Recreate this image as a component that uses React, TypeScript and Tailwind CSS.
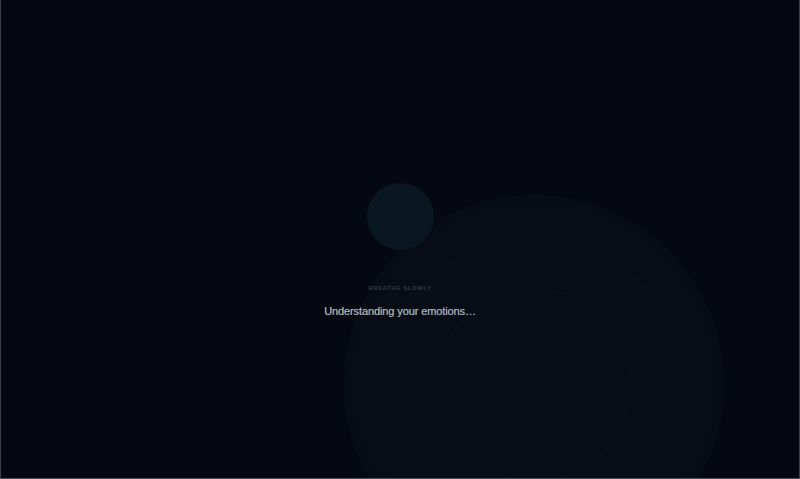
export default function App() {
  return (
    <div className="relative h-[479px] w-[800px] overflow-hidden border-x border-b border-x-[#3b3e46] border-b-[#4a4d55] bg-[#050811] font-['Liberation_Sans',sans-serif]">
      {/* soft breathing rings in the background */}
      <div className="pointer-events-none absolute left-[343px] top-[195px] h-[380px] w-[380px] rounded-full bg-[radial-gradient(circle,#070c15_60%,#060b13_85%,#050811_100%)]" />
      <div className="pointer-events-none absolute left-[383px] top-[235px] h-[300px] w-[300px] rounded-full bg-[radial-gradient(circle,#070d16_60%,#08111b_92%,#070c15_100%)]" />
      <div className="pointer-events-none absolute left-[436px] top-[288px] h-[194px] w-[194px] rounded-full border border-[#09131d] bg-[#070d16]" />

      <div className="relative flex flex-col items-center pt-[183px]">
        <div className="h-[67px] w-[67px] rounded-full bg-[#0b1720]" />
        <p className="mt-[35px] text-[6px] font-bold uppercase leading-none tracking-[0.1em] text-[#343b47]">
          Breathe slowly
        </p>
        <p className="mt-[15px] text-[11px] leading-none tracking-[-0.01em] text-[#a0a7b5] [text-shadow:0_0_0.4px_#a0a7b5]">
          Understanding your emotions…
        </p>
      </div>
    </div>
  );
}
